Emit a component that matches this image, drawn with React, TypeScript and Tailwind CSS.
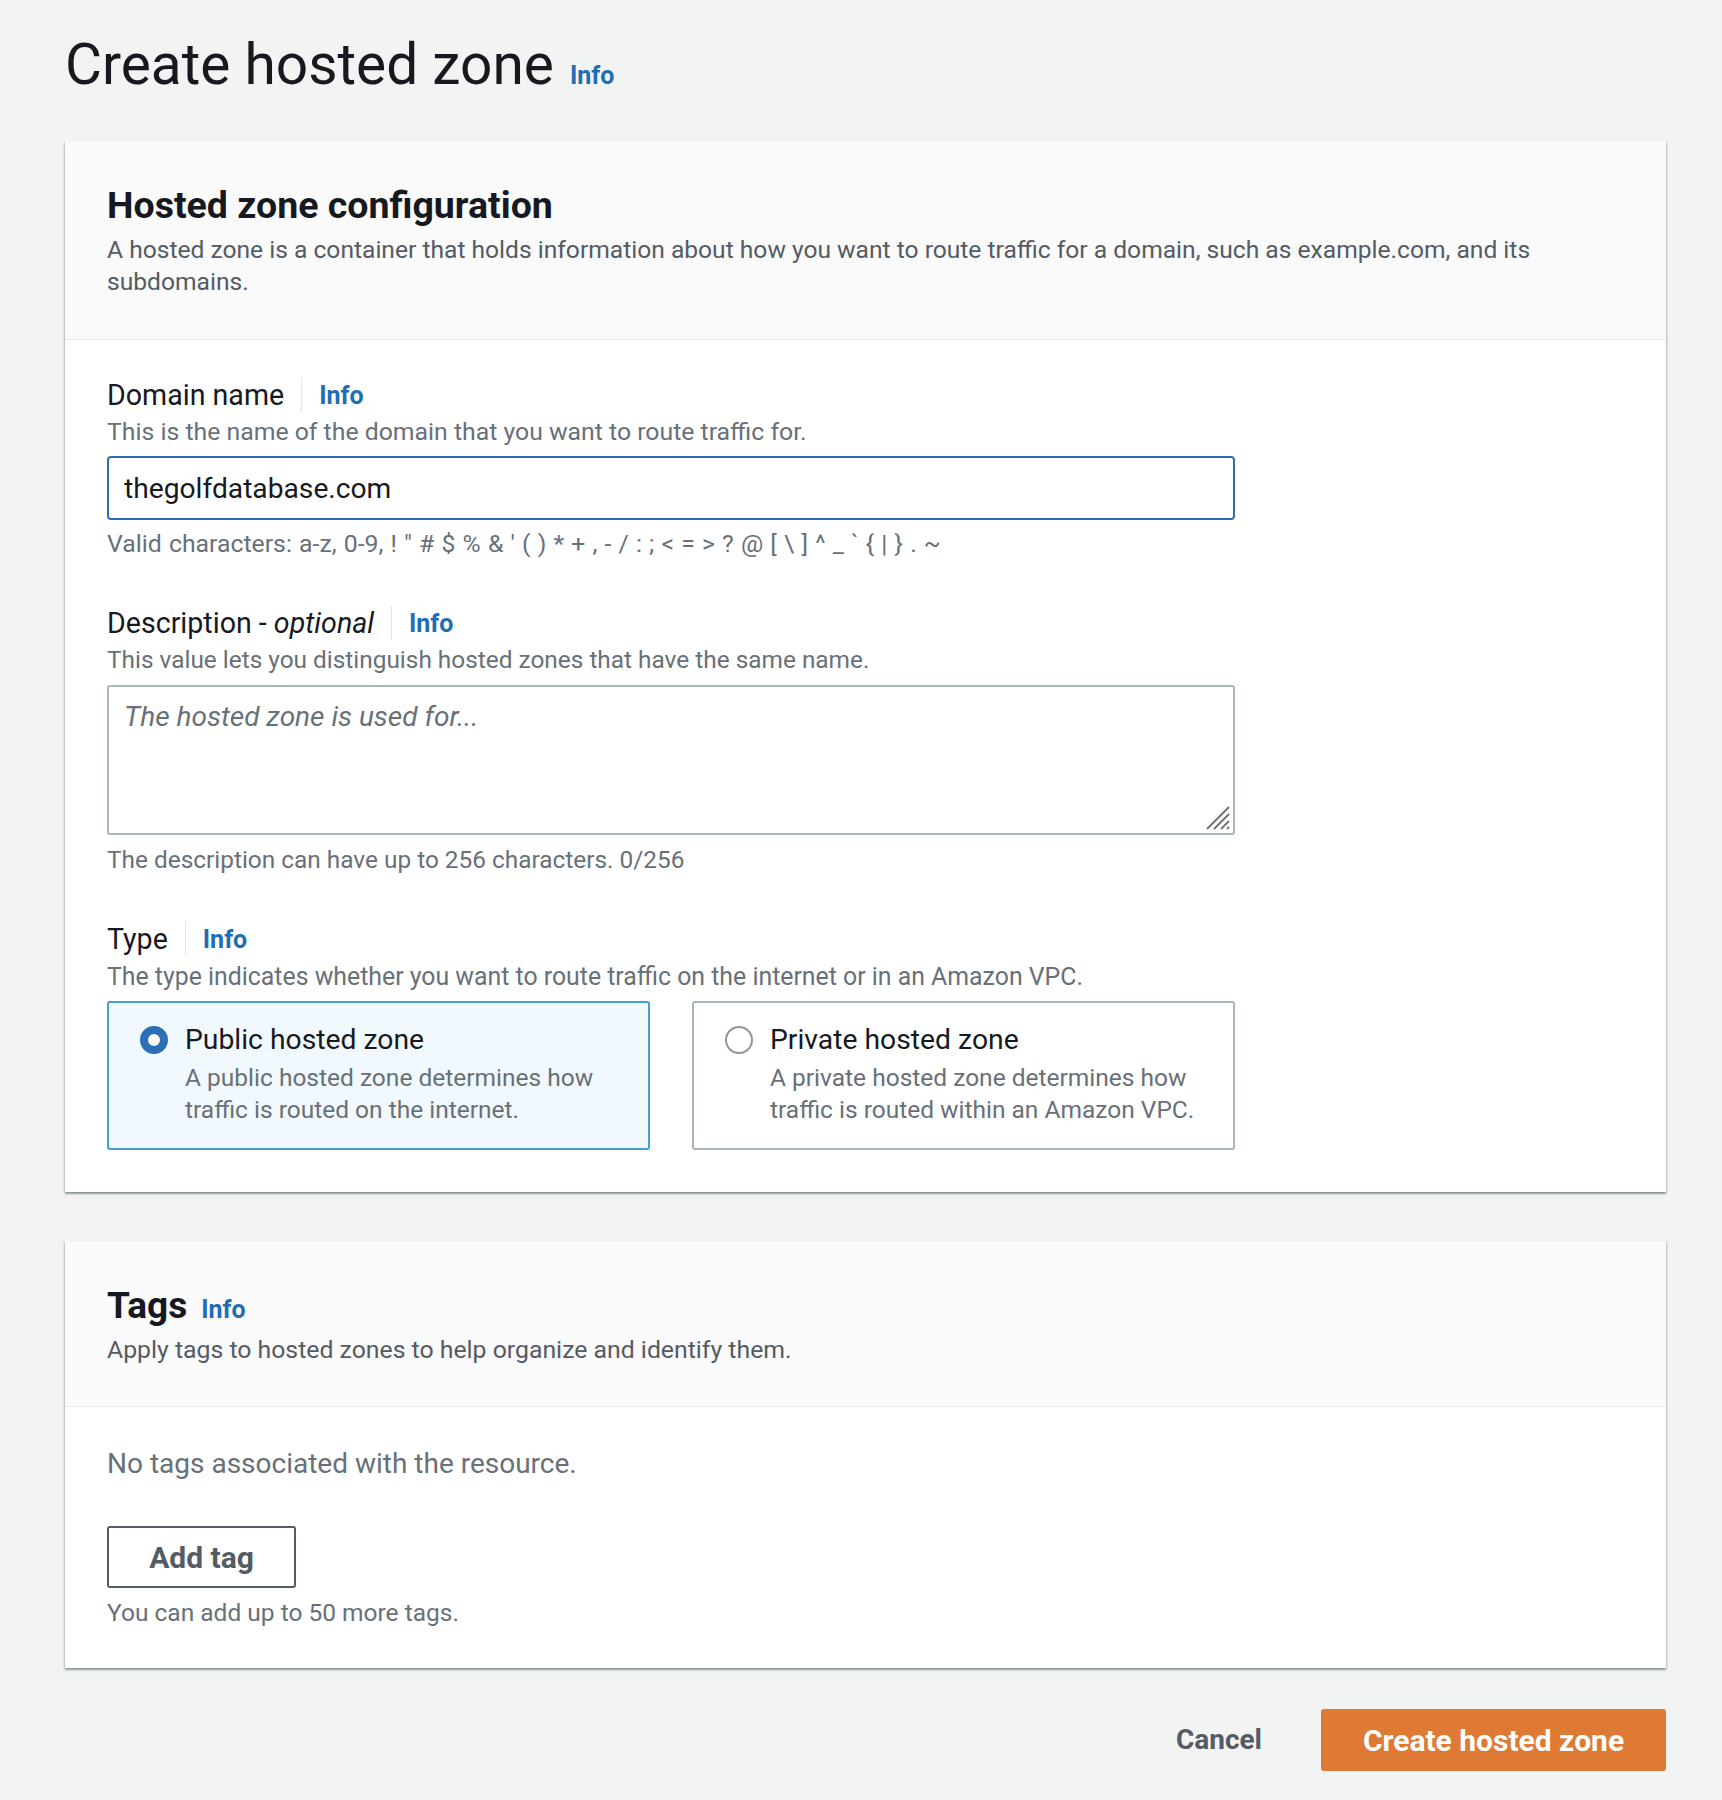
import React from "react";

function InfoLink({ className = "" }: { className?: string }) {
  return (
    <a href="#" className={`text-[25px] font-bold text-[#1f6db5] leading-none ${className}`}>
      Info
    </a>
  );
}

function FieldLabel({ children }: { children: React.ReactNode }) {
  return (
    <div className="flex items-center h-[36px]">
      <span className="text-[28.6px] leading-[36px] text-[#16191f]">{children}</span>
      <span className="mx-[17px] h-[34px] w-px bg-[#e3e6e8]" />
      <InfoLink />
    </div>
  );
}

function RadioTile({
  title,
  lines,
  checked,
}: {
  title: string;
  lines: string[];
  checked?: boolean;
}) {
  return (
    <label
      className={
        checked
          ? "flex items-start gap-[17px] rounded-[3px] border-2 border-[#44a0d4] bg-[#f1f9fe] pl-[31px] pr-4 pt-[19px] pb-[22px]"
          : "flex items-start gap-[17px] rounded-[3px] border-2 border-[#aab7b8] bg-white pl-[31px] pr-4 pt-[19px] pb-[22px]"
      }
    >
      {checked ? (
        <span className="mt-[4px] h-[28px] w-[28px] shrink-0 rounded-full border-[8px] border-[#2d6fb6] bg-white" />
      ) : (
        <span className="mt-[4px] h-[28px] w-[28px] shrink-0 rounded-full border-2 border-[#8d9799] bg-white" />
      )}
      <span className="flex flex-col">
        <span className="text-[28.3px] leading-[36px] text-[#16191f]">{title}</span>
        <span className="mt-[4px] text-[24.5px] leading-[32px] text-[#687078]">
          {lines.map((l) => (
            <span key={l} className="block">
              {l}
            </span>
          ))}
        </span>
      </span>
    </label>
  );
}

const cardShadow =
  "shadow-[0_2px_2px_0_rgba(0,28,36,0.3),1px_1px_2px_0_rgba(0,28,36,0.15),-1px_1px_2px_0_rgba(0,28,36,0.15)]";

export default function App() {
  return (
    <div className="min-h-screen bg-[#f2f3f3] font-['Roboto',sans-serif] text-[#16191f] pl-[65px] pr-[56px] pt-[29px] pb-[29px]">
      <div className="flex items-baseline">
        <h1 className="text-[56.8px] leading-[72px] font-normal text-[#16191f]">Create hosted zone</h1>
        <InfoLink className="ml-[16px]" />
      </div>

      {/* Hosted zone configuration */}
      <section className={`mt-[40px] bg-white ${cardShadow}`}>
        <div className="bg-[#fafafa] border-b border-[#eaeded] px-[42px] pt-[42px] pb-[41px]">
          <h2 className="text-[37.5px] leading-[44px] font-bold">Hosted zone configuration</h2>
          <p className="mt-[7px] text-[24.6px] leading-[32px] text-[#545b64]">
            A hosted zone is a container that holds information about how you want to route traffic for a
            domain, such as example.com, and its subdomains.
          </p>
        </div>

        <div className="px-[42px] pt-[37px] pb-[42px]">
          <div className="max-w-[1128px]">
            <FieldLabel>Domain name</FieldLabel>
            <p className="mt-[3px] text-[24.8px] leading-[32px] text-[#687078]">
              This is the name of the domain that you want to route traffic for.
            </p>
            <input
              defaultValue="thegolfdatabase.com"
              className="mt-[8px] block h-[64px] w-full rounded-[4px] border-2 border-[#2e6db4] bg-white px-[15px] text-[28.2px] text-[#16191f] outline-none"
            />
            <p className="mt-[8px] text-[24.8px] leading-[32px] text-[#687078] [word-spacing:1px]">
              Valid characters: a-z, 0-9, ! " # $ % &amp; ' ( ) * + , - / : ; &lt; = &gt; ? @ [ \ ] ^ _ ` {"{"} | {"}"} . ~
            </p>

            <div className="mt-[45px]">
              <FieldLabel>
                Description - <i>optional</i>
              </FieldLabel>
            </div>
            <p className="mt-[3px] text-[24.4px] leading-[32px] text-[#687078]">
              This value lets you distinguish hosted zones that have the same name.
            </p>
            <div className="relative mt-[9px]">
              <textarea
                placeholder="The hosted zone is used for..."
                className="block h-[150px] w-full resize-none rounded-[3px] border-2 border-[#aab7b8] bg-white px-[15px] pt-[12px] text-[28px] leading-[36px] text-[#16191f] outline-none placeholder:italic placeholder:text-[#687078]"
              />
              <svg
                className="absolute bottom-[4px] right-[4px]"
                width="26"
                height="26"
                viewBox="0 0 26 26"
                stroke="#6f7478"
                strokeWidth="2"
              >
                <line x1="24" y1="2" x2="2" y2="24" />
                <line x1="24" y1="9" x2="9" y2="24" />
                <line x1="24" y1="16" x2="16" y2="24" />
                <line x1="24" y1="22" x2="22" y2="24" />
              </svg>
            </div>
            <p className="mt-[9px] text-[24.4px] leading-[32px] text-[#687078]">
              The description can have up to 256 characters. 0/256
            </p>

            <div className="mt-[45px]">
              <FieldLabel>Type</FieldLabel>
            </div>
            <p className="mt-[4px] text-[24.85px] leading-[32px] text-[#687078]">
              The type indicates whether you want to route traffic on the internet or in an Amazon VPC.
            </p>
            <div className="mt-[8px] grid grid-cols-2 gap-[42px]">
              <RadioTile
                checked
                title="Public hosted zone"
                lines={["A public hosted zone determines how", "traffic is routed on the internet."]}
              />
              <RadioTile
                title="Private hosted zone"
                lines={["A private hosted zone determines how", "traffic is routed within an Amazon VPC."]}
              />
            </div>
          </div>
        </div>
      </section>

      {/* Tags */}
      <section className={`mt-[49px] bg-white ${cardShadow}`}>
        <div className="bg-[#fafafa] border-b border-[#eaeded] px-[42px] pt-[43px] pb-[40px]">
          <div className="flex items-baseline">
            <h2 className="text-[37px] leading-[44px] font-bold">Tags</h2>
            <InfoLink className="ml-[14px]" />
          </div>
          <p className="mt-[6px] text-[24.8px] leading-[32px] text-[#545b64]">
            Apply tags to hosted zones to help organize and identify them.
          </p>
        </div>
        <div className="px-[42px] pt-[39px] pb-[39px]">
          <p className="text-[28px] leading-[36px] text-[#687078]">No tags associated with the resource.</p>
          <button className="mt-[44px] h-[62px] w-[189px] rounded-[3px] border-2 border-[#545b64] bg-white text-[30px] font-bold text-[#545b64]">
            Add tag
          </button>
          <p className="mt-[9px] text-[24.5px] leading-[32px] text-[#687078]">You can add up to 50 more tags.</p>
        </div>
      </section>

      <div className="mt-[41px] flex items-center justify-end gap-[59px]">
        <button className="text-[28px] font-bold text-[#545b64]">Cancel</button>
        <button className="h-[62px] w-[345px] rounded-[3px] bg-[#df7a34] text-[30px] font-bold text-white">
          Create hosted zone
        </button>
      </div>
    </div>
  );
}
